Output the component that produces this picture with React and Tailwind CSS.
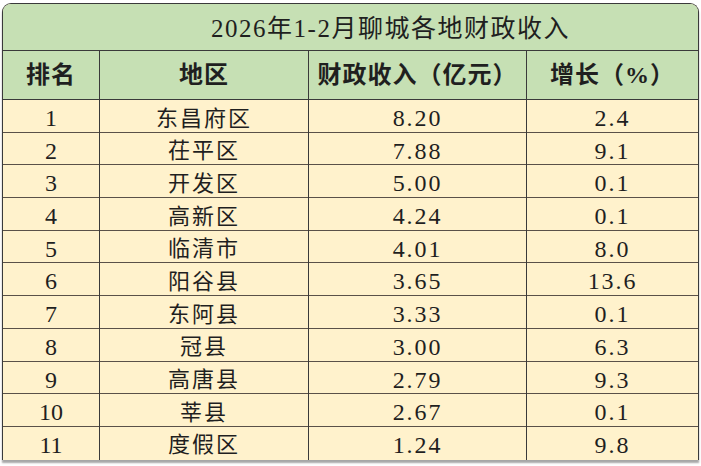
// 聊城各地财政收入 table — green title/header band, cream data rows.
const rows = [
  ['1', '东昌府区', '8.20', '2.4'],
  ['2', '茌平区', '7.88', '9.1'],
  ['3', '开发区', '5.00', '0.1'],
  ['4', '高新区', '4.24', '0.1'],
  ['5', '临清市', '4.01', '8.0'],
  ['6', '阳谷县', '3.65', '13.6'],
  ['7', '东阿县', '3.33', '0.1'],
  ['8', '冠县', '3.00', '6.3'],
  ['9', '高唐县', '2.79', '9.3'],
  ['10', '莘县', '2.67', '0.1'],
  ['11', '度假区', '1.24', '9.8'],
]

const cols = 'grid grid-cols-[97px_209px_218px_1fr]'

export default function App() {
  return (
    <div
      className="w-[701px] h-[466px] bg-white pt-[3px] pl-[2px] pr-[2px] text-[#1f1f1f]"
      style={{ fontFamily: '"Liberation Serif", "Noto Sans CJK SC", serif' }}
    >
      <div className="w-[697px] rounded-t-[9px] overflow-hidden border-[1.5px] border-[#3a3a3a] border-b-0 shadow-[0_3px_2px_rgba(0,0,0,0.35)] bg-[#fff2cc]">
        <div className="h-[47px] pt-[3px] pl-[80px] bg-[#c6e0b4] flex items-center justify-center text-[25px] tracking-[1.5px] border-b border-[#3a3a3a]">
          2026年1-2月聊城各地财政收入
        </div>
        <div className={`${cols} h-[49px] bg-[#c6e0b4] border-b border-[#3a3a3a] text-[24px] font-semibold tracking-[1px]`}>
          <div className="flex items-center justify-center border-r border-[#3a3a3a]">排名</div>
          <div className="flex items-center justify-center border-r border-[#3a3a3a]">地区</div>
          <div className="flex items-center justify-center border-r border-[#3a3a3a]">财政收入（亿元）</div>
          <div className="flex items-center justify-center">增长（%）</div>
        </div>
        {rows.map((r, i) => (
          <div
            key={r[0]}
            className={`${cols} h-[32.7px] text-[24px] ${i < rows.length - 1 ? 'border-b border-[#5a5148]' : ''}`}
          >
            <div className="flex items-center justify-center border-r border-[#3a3a3a]">{r[0]}</div>
            <div className="flex items-center justify-center border-r border-[#3a3a3a] text-[22px] tracking-[2px]">{r[1]}</div>
            <div className="flex items-center justify-center border-r border-[#3a3a3a] tracking-[0.08em]">{r[2]}</div>
            <div className="flex items-center justify-center tracking-[0.08em]">{r[3]}</div>
          </div>
        ))}
      </div>
    </div>
  )
}
